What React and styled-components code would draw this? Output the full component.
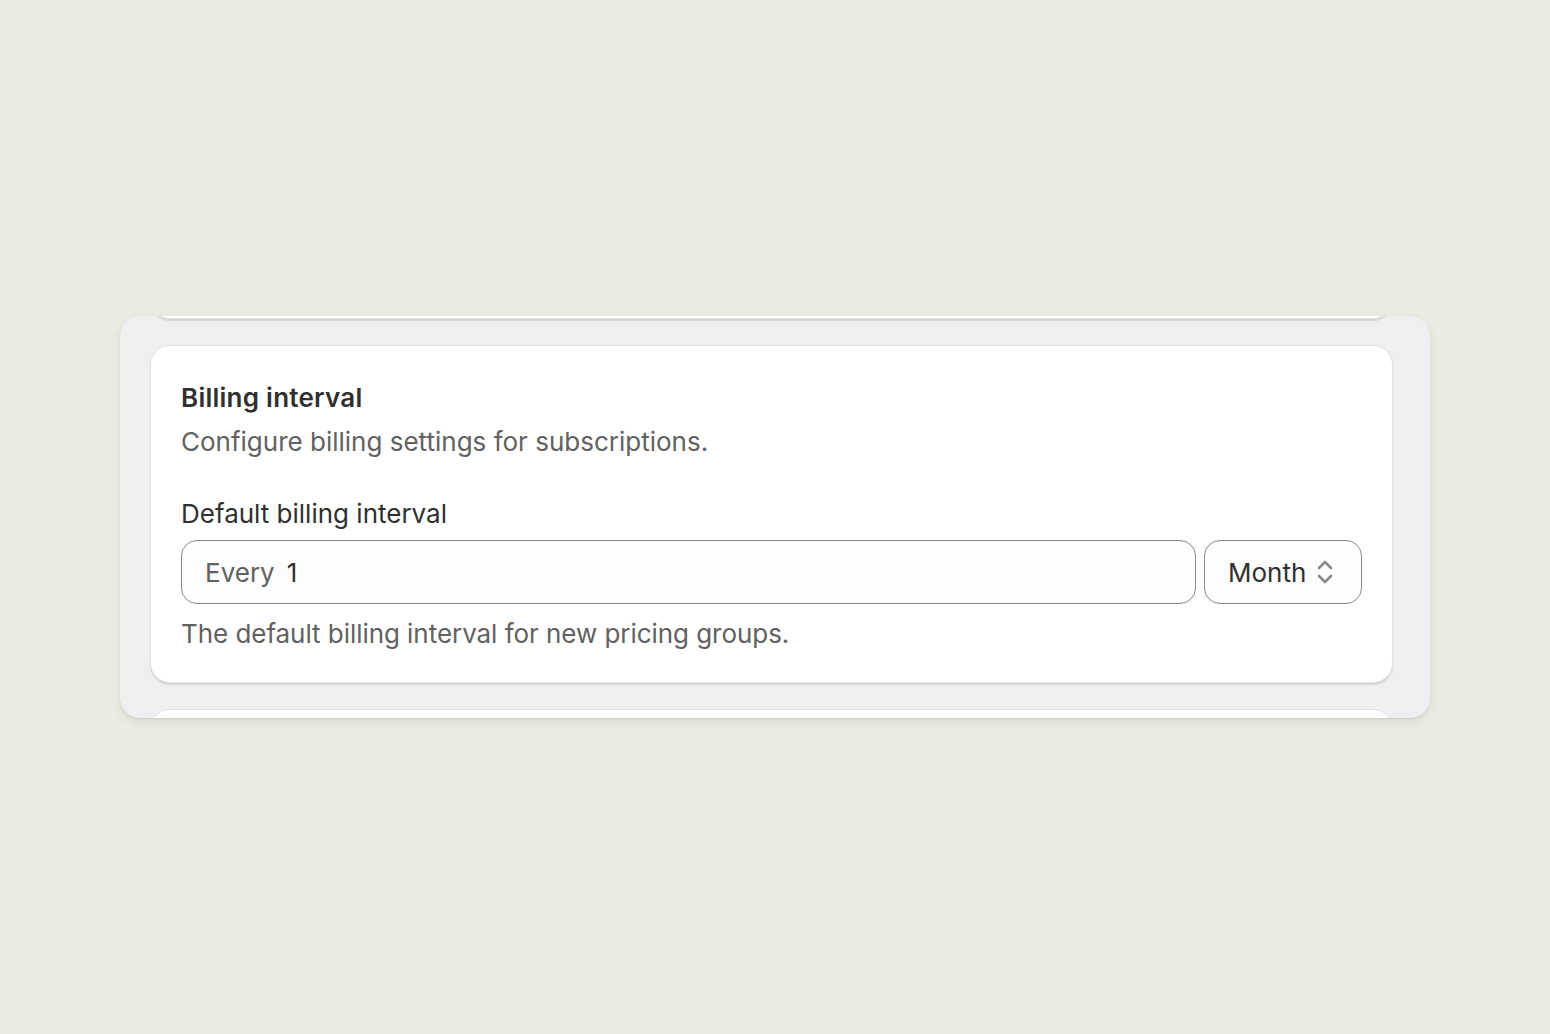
import styled, { createGlobalStyle } from "styled-components"

const GlobalStyle = createGlobalStyle`
  html, body {
    margin: 0;
    padding: 0;
    background: #ebeae3;
    font-family: Inter, "Noto Sans", sans-serif;
  }
`

const Page = styled.div`
  width: 1550px;
  height: 1034px;
  display: flex;
  flex-direction: column;
  align-items: center;
  padding-top: 316px;
  box-sizing: border-box;
`

const Panel = styled.div`
  width: 1310px;
  height: 402px;
  box-sizing: border-box;
  background: #efefef;
  border-radius: 20px;
  box-shadow: 0 4px 10px rgba(0, 0, 0, 0.08), 0 1px 2px rgba(0, 0, 0, 0.06);
  overflow: hidden;
  display: flex;
  flex-direction: column;
  gap: 26px;
  padding: 0 37px 0 30px;
`

const Card = styled.section`
  flex: none;
  background: #ffffff;
  border-radius: 20px;
  border: 1px solid #e2e2e2;
  box-shadow: 0 2px 1px rgba(0, 0, 0, 0.1);
  box-sizing: border-box;
  height: ${p => p.$height || "auto"};
  margin-top: ${p => p.$pullUp ? `-${p.$pullUp}px` : "0"};
  padding: 36px 30px 32px;
  display: flex;
  flex-direction: column;
`

const Title = styled.h2`
  margin: 0;
  font-size: 26px;
  line-height: 32px;
  font-weight: 600;
  letter-spacing: 0.25px;
  color: #303030;
`

const Description = styled.p`
  margin: 12px 0 0;
  font-size: 26px;
  line-height: 32px;
  color: #616161;
`

const Field = styled.div`
  margin-top: 40px;
  display: flex;
  flex-direction: column;
`

const Label = styled.label`
  font-size: 26px;
  line-height: 32px;
  color: #303030;
  margin-bottom: 10px;
`

const Row = styled.div`
  display: flex;
  gap: 8px;
`

const Input = styled.div`
  flex: 1;
  height: 64px;
  box-sizing: border-box;
  border: 1px solid #8a8a8a;
  border-radius: 16px;
  background: #fdfdfd;
  display: flex;
  align-items: center;
  gap: 12px;
  padding: 0 23px;
  font-size: 26px;
`

const Prefix = styled.span`
  color: #616161;
`

const Value = styled.span`
  color: #303030;
`

const Select = styled.div`
  width: 158px;
  height: 64px;
  box-sizing: border-box;
  border: 1px solid #8a8a8a;
  border-radius: 16px;
  background: #fdfdfd;
  display: flex;
  align-items: center;
  justify-content: space-between;
  padding: 0 26px 0 23px;
  font-size: 26px;
  color: #303030;
`

const Help = styled.p`
  margin: 14px 0 0;
  font-size: 26px;
  line-height: 32px;
  letter-spacing: -0.05px;
  color: #616161;
`

const Chevrons = () => (
  <svg width="20" height="28" viewBox="0 0 20 28" fill="none" stroke="#8a8a8a" strokeWidth="2.6" strokeLinecap="round" strokeLinejoin="round">
    <path d="M4 10 L10 4 L16 10" />
    <path d="M4 18 L10 24 L16 18" />
  </svg>
)

export default function App() {
  return (
    <>
      <GlobalStyle />
      <Page>
        <Panel>
          <Card $height="120px" $pullUp={117} />
          <Card>
            <Title>Billing interval</Title>
            <Description>Configure billing settings for subscriptions.</Description>
            <Field>
              <Label>Default billing interval</Label>
              <Row>
                <Input>
                  <Prefix>Every</Prefix>
                  <Value>1</Value>
                </Input>
                <Select>
                  <span>Month</span>
                  <Chevrons />
                </Select>
              </Row>
              <Help>The default billing interval for new pricing groups.</Help>
            </Field>
          </Card>
          <Card $height="120px" />
        </Panel>
      </Page>
    </>
  )
}
